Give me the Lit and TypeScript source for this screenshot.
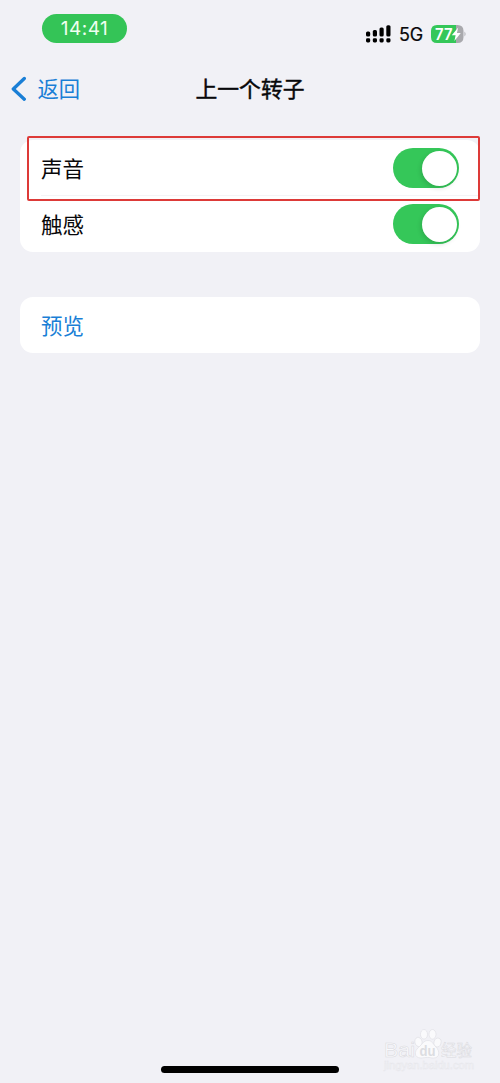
import { LitElement, html, css, svg } from "lit";
import { customElement, property } from "lit/decorators.js";

@customElement("ios-switch")
class IosSwitch extends LitElement {
  static styles = css`
    :host { display: block; }
    .track { width: 66px; height: 40px; border-radius: 20px; background: #35c759; display: flex; align-items: center; justify-content: flex-end; padding-right: 2.5px; box-sizing: border-box; }
    .knob { width: 35px; height: 35px; border-radius: 50%; background: #fff; box-shadow: -1px 2px 5px rgba(0, 0, 0, 0.14); }
  `;
  render() {
    return html`<div class="track"><div class="knob"></div></div>`;
  }
}

@customElement("setting-row")
class SettingRow extends LitElement {
  @property() label = "";
  static styles = css`
    :host { display: flex; align-items: center; justify-content: space-between; height: 56px; padding: 0 20.6px 0 21px; box-sizing: border-box; }
    .label { font-size: 21.5px; line-height: 30px; padding-top: 2px; }
  `;
  render() {
    return html`<span class="label">${this.label}</span><slot></slot>`;
  }
}

@customElement("app-root")
class AppRoot extends LitElement {
  static styles = css`
    :host { display: block; font-family: Inter, "Noto Sans CJK SC", sans-serif; color: #08080a; }
    .screen { position: relative; display: flex; flex-direction: column; height: 1083px; background: #f1f1f6; overflow: hidden; box-sizing: border-box; }
    .status { display: flex; justify-content: space-between; align-items: flex-start; height: 60px; padding: 14px 33px 0 42px; box-sizing: border-box; }
    .time { width: 85px; height: 29px; border-radius: 15px; background: #34c457; color: #effff0; font-size: 19px; line-height: 30px; text-align: center; letter-spacing: 0.5px; }
    .right { display: flex; align-items: center; height: 40px; }
    .signal { width: 26px; height: 18px; }
    .net { font-size: 18px; line-height: 20px; margin-left: 7px; width: 26px; letter-spacing: -0.2px; padding-top: 1px; -webkit-text-stroke: 0.2px #08080a; }
    .battery { width: 36px; height: 18px; margin-left: 6px; }
    .bt { font: 600 15.5px Inter, sans-serif; fill: #fff; }
    .nav { display: grid; grid-template-columns: 1fr auto 1fr; align-items: center; height: 58px; padding: 0 11px; }
    .back { display: flex; align-items: center; color: #1a7fd6; font-size: 21.3px; line-height: 30px; }
    .chev { width: 16px; height: 26px; margin-right: 10.5px; }
    .title { font-size: 21.8px; line-height: 30px; -webkit-text-stroke: 0.45px #08080a; }
    .card { margin: 0 20px; background: #fff; border-radius: 13px; }
    .first { margin-top: 22px; }
    .second { margin-top: 45px; color: #1a7fd6; }
    .rule { height: 1px; margin: -1px 0 0 21px; background: #f4f4f6; }
    .mark { position: absolute; left: 27px; top: 136px; width: 453px; height: 65px; border: 2px solid #dd3a38; border-radius: 2px; box-sizing: border-box; }
    .water { position: absolute; left: 380px; top: 1022px; width: 100px; height: 52px; }
    .home { position: absolute; left: 161px; top: 1066px; width: 178px; height: 7px; border-radius: 4px; background: #000; }
    .w1 { font: 400 20px "Liberation Sans", sans-serif; }
    .w2 { font: 700 14px "Liberation Sans", sans-serif; fill: #dcdde1; }
    .w3 { font: 400 16px "Noto Sans CJK SC", sans-serif; }
    .w4 { font: 400 10px "Liberation Sans", sans-serif; }
  `;

  render() {
    const bars = [
      [0, 6.5, 5],
      [6.8, 5, 6.5],
      [13.5, 2.5, 9],
      [20.3, 0.2, 11.3],
    ];
    return html`
      <div class="screen">
        <div class="status">
          <div class="time">14:41</div>
          <div class="right">
            <svg class="signal" viewBox="0 0 26 18">
              ${bars.map(([x, y, h]) => svg`<rect x=${x} y=${y} width="4.2" height=${h} rx="1.5"></rect><rect x=${x} y="13.3" width="4.2" height="4.2" rx="1.4"></rect>`)}
            </svg>
            <span class="net">5G</span>
            <svg class="battery" viewBox="0 0 36 18">
              <path d="M6 0H25V18H6Q0 18 0 12V6Q0 0 6 0Z" fill="#35c759"></path>
              <path d="M25 0H26.5Q32.5 0 32.5 6V12Q32.5 18 26.5 18H25Z" fill="#a9a9ad"></path>
              <path d="M33.5 6.5Q35.6 9 33.5 11.5Z" fill="#a9a9ad"></path>
              <text class="bt" x="4" y="14.6" textLength="17.5" lengthAdjust="spacingAndGlyphs">77</text>
              <path d="M27.2 2.5L20.8 10.2H24.6L23.4 16L29.8 8H25.9Z" fill="#fff"></path>
            </svg>
          </div>
        </div>
        <div class="nav">
          <div class="back">
            <svg class="chev" viewBox="0 0 16 26"><path d="M13.3 2.5L2.3 13L13.3 23.2" fill="none" stroke="#1a7fd6" stroke-width="3.3" stroke-linecap="round" stroke-linejoin="round"></path></svg>
            <span>返回</span>
          </div>
          <div class="title">上一个转子</div>
          <div></div>
        </div>
        <div class="card first">
          <setting-row label="声音"><ios-switch></ios-switch></setting-row>
          <div class="rule"></div>
          <setting-row label="触感"><ios-switch></ios-switch></setting-row>
        </div>
        <div class="card second"><setting-row label="预览"></setting-row></div>
        <div class="mark"></div>
        <svg class="water" viewBox="0 0 100 52">
          <g fill="#fafafc" stroke="#d9d9de" stroke-width="0.5">
            <text class="w1" x="4" y="35" textLength="31" lengthAdjust="spacingAndGlyphs">Bai</text>
            <ellipse cx="38.5" cy="20" rx="3.6" ry="4.7" transform="rotate(-15 38.5 20)"></ellipse>
            <ellipse cx="44" cy="12.3" rx="3.5" ry="4.8"></ellipse>
            <ellipse cx="52.5" cy="12.3" rx="3.5" ry="4.8"></ellipse>
            <ellipse cx="57.5" cy="20.5" rx="3.5" ry="4.4" transform="rotate(15 57.5 20.5)"></ellipse>
            <path d="M48 18.5C52 18.5 53 22 56 25C60 29 60 36 53.5 36C50 36 50 35.3 47.5 35.3C45 35.3 44 36 41 36C34 36 34 29 38.5 25.5C42 22.5 43.5 18.5 48 18.5Z"></path>
            <text class="w3" x="61" y="34" textLength="31" lengthAdjust="spacingAndGlyphs">经验</text>
          </g>
          <text class="w2" x="39.5" y="33.8" textLength="16" lengthAdjust="spacingAndGlyphs">du</text>
          <text class="w4" x="4" y="47" textLength="90" lengthAdjust="spacingAndGlyphs" fill="#f5f5f8" stroke="#e6e6eb" stroke-width="0.4">jingyan.baidu.com</text>
        </svg>
        <div class="home"></div>
      </div>
    `;
  }
}
